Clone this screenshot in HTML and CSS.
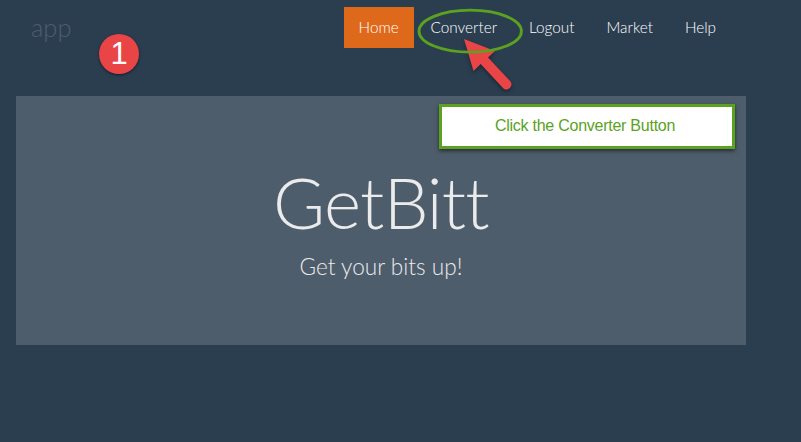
FILE: index.html
```html
<!DOCTYPE html>
<html lang="en">
<head>
<meta charset="utf-8">
<title>GetBitt</title>
<link rel="stylesheet" href="styles.css">
</head>
<body>
<div class="page">
  <header class="header">
    <a class="brand">app</a>
    <nav class="nav">
      <a class="active">Home</a>
      <a>Converter</a>
      <a>Logout</a>
      <a>Market</a>
      <a>Help</a>
    </nav>
  </header>
  <main class="hero">
    <h1>GetBitt</h1>
    <p>Get your bits up!</p>
  </main>
  <div class="step">1</div>
  <svg class="marks" width="801" height="160" viewBox="0 0 801 160">
    <path class="arrow" d="M464 39L495 51L488 57.5L510.500 81.500C514 86 507 93 502.500 87.500L480.700 64L473.500 71Z"/>
    <ellipse class="ring" cx="470.200" cy="31.200" rx="51.200" ry="21"/>
  </svg>
  <div class="callout">Click the Converter Button</div>
</div>
</body>
</html>
```
FILE: styles.css
```css
* { box-sizing: border-box; }
body { margin: 0; background: #2b3e50; color: #ebebeb; font-family: Lato, sans-serif; font-variant-ligatures: none; }
.page { position: relative; height: 442px; overflow: hidden; padding: 7px 55px 0 16px; }
.header { display: flex; justify-content: space-between; height: 89px; padding: 0 14px 0 15px; }
.brand { font-size: 25.500px; font-weight: 300; line-height: 40px; color: #4e5d6c; }
.nav { display: flex; gap: 2px; height: 41px; }
.nav a { padding: 0 15px; font-size: 15.300px; font-weight: 300; line-height: 41px; color: #fff; }
.nav a:last-child { padding-right: 16px; }
.nav .active { width: 70px; background: #df691a; }
.hero { height: 249px; padding-top: 62px; background: #4e5d6c; text-align: center; }
h1 { margin: 0; font-size: 71px; font-weight: 300; line-height: 88px; letter-spacing: -0.800px; }
p { margin: 5px 0 0; font-size: 22.600px; font-weight: 300; line-height: 32px; }
.step { position: absolute; left: 99px; top: 34px; width: 40px; height: 40px; border-radius: 50%; background: #e94547; color: #fff; font: 31px/40px "Liberation Sans", sans-serif; text-align: center; box-shadow: 0 1px 3px #0008; }
.marks { position: absolute; left: 0; top: 0; }
.ring { fill: none; stroke: #5ba21f; stroke-width: 2.800; }
.arrow { fill: #e94547; filter: drop-shadow(0 2px 2px #0006); }
.callout { position: absolute; left: 439px; top: 104px; width: 296px; height: 45px; padding-right: 4px; border: 3px solid #5ba21f; background: #fff; color: #5ba21f; font: 16px/38px "Liberation Sans", sans-serif; letter-spacing: -0.250px; text-align: center; box-shadow: 0 2px 4px #0008; }
```
